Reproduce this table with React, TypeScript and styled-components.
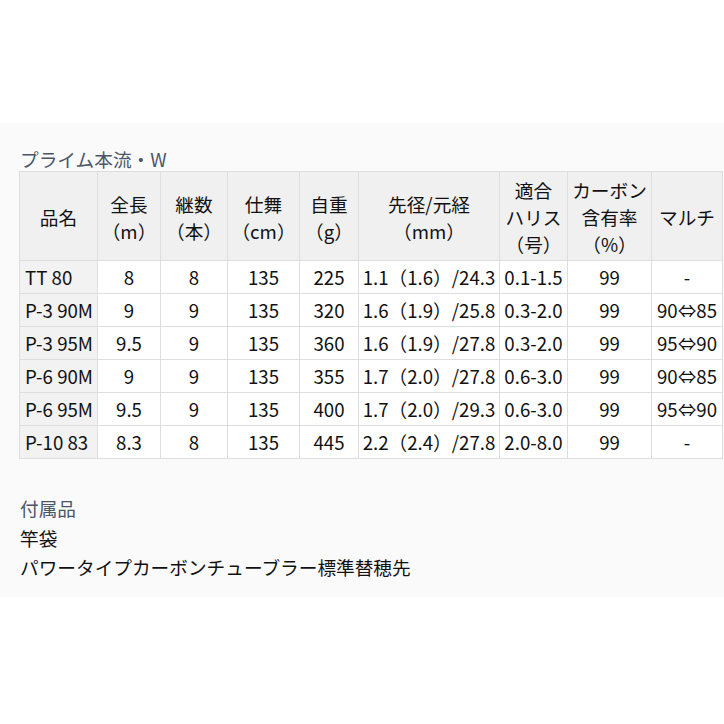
import React from 'react';
import styled, { createGlobalStyle } from 'styled-components';

const GlobalStyle = createGlobalStyle`
  body {
    margin: 0;
    background: #ffffff;
    font-family: "Noto Sans CJK JP", "Noto Sans", sans-serif;
    color: #111111;
  }
`;

const Panel = styled.section`
  margin-top: 123px;
  background: #fafafb;
  padding: 24px 0 15px 19px;
  overflow: hidden;
`;

const Title = styled.h2`
  margin: 0 0 0 1px;
  font-size: 18.67px;
  line-height: 24px;
  font-weight: 400;
  color: #4b5567;
`;

const SpecTable = styled.table`
  width: 703px;
  table-layout: fixed;
  border-collapse: collapse;
  font-size: 18.67px;
  line-height: 27px;
`;

const HeadCell = styled.th`
  background: #f0f0f0;
  border: 1px solid #dedede;
  font-weight: 400;
  text-align: center;
  padding: 4px 0 3px;
  white-space: nowrap;
`;

const Cell = styled.td<{ $name?: boolean }>`
  background: ${(p) => (p.$name ? '#f2f2f2' : '#ffffff')};
  border: 1px solid #dedede;
  text-align: ${(p) => (p.$name ? 'left' : 'center')};
  padding: 2px ${(p) => (p.$name ? '5px' : '0')} 3px;
  white-space: nowrap;
`;

const Notes = styled.div`
  margin-top: 34px;
  padding-left: 1px;
  font-size: 18.67px;
  line-height: 29.5px;
`;

const NoteLabel = styled.div`
  color: #4b5567;
`;

const columns = [78, 63, 67, 72, 59, 141, 68, 84, 71];

const headers: string[][] = [
  ['品名'],
  ['全長', '（m）'],
  ['継数', '（本）'],
  ['仕舞', '（cm）'],
  ['自重', '（g）'],
  ['先径/元経', '（mm）'],
  ['適合', 'ハリス', '（号）'],
  ['カーボン', '含有率', '（%）'],
  ['マルチ'],
];

const rows: string[][] = [
  ['TT 80', '8', '8', '135', '225', '1.1（1.6）/24.3', '0.1-1.5', '99', '-'],
  ['P-3 90M', '9', '9', '135', '320', '1.6（1.9）/25.8', '0.3-2.0', '99', '90⇔85'],
  ['P-3 95M', '9.5', '9', '135', '360', '1.6（1.9）/27.8', '0.3-2.0', '99', '95⇔90'],
  ['P-6 90M', '9', '9', '135', '355', '1.7（2.0）/27.8', '0.6-3.0', '99', '90⇔85'],
  ['P-6 95M', '9.5', '9', '135', '400', '1.7（2.0）/29.3', '0.6-3.0', '99', '95⇔90'],
  ['P-10 83', '8.3', '8', '135', '445', '2.2（2.4）/27.8', '2.0-8.0', '99', '-'],
];

const App = () => {
  return (
    <>
      <GlobalStyle />
      <Panel>
        <Title>プライム本流・W</Title>
        <SpecTable>
          <colgroup>
            {columns.map((w, i) => (
              <col key={`col-${i}`} style={{ width: w }} />
            ))}
          </colgroup>
          <thead>
            <tr>
              {headers.map((lines, i) => (
                <HeadCell key={`head-${i}`}>
                  {lines.map((line, j) => (
                    <div key={`head-${i}-${j}`}>{line}</div>
                  ))}
                </HeadCell>
              ))}
            </tr>
          </thead>
          <tbody>
            {rows.map((row) => (
              <tr key={row[0]}>
                {row.map((value, i) => (
                  <Cell key={`${row[0]}-${i}`} $name={i === 0}>
                    {value}
                  </Cell>
                ))}
              </tr>
            ))}
          </tbody>
        </SpecTable>
        <Notes>
          <NoteLabel>付属品</NoteLabel>
          <div>竿袋</div>
          <div>パワータイプカーボンチューブラー標準替穂先</div>
        </Notes>
      </Panel>
    </>
  );
};

export default App;
